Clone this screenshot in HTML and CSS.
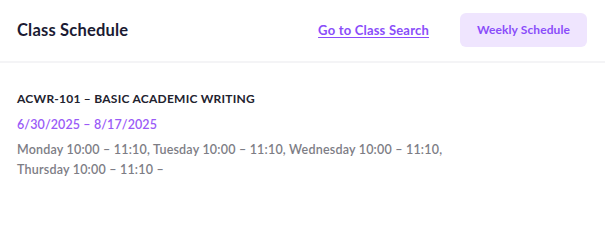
FILE: index.html
```html
<!DOCTYPE html>
<html lang="en">
<head>
<meta charset="utf-8">
<title>Class Schedule</title>
<link rel="stylesheet" href="styles.css">
</head>
<body>
<div class="page">
  <header class="header">
    <h1 class="title">Class Schedule</h1>
    <div class="actions">
      <a class="link" href="#">Go to Class Search</a>
      <button class="btn" type="button">Weekly Schedule</button>
    </div>
  </header>
  <section class="course">
    <h2 class="course-name">ACWR-101 – BASIC ACADEMIC WRITING</h2>
    <p class="dates">6/30/2025 – 8/17/2025</p>
    <p class="times">Monday 10:00 – 11:10, Tuesday 10:00 – 11:10, Wednesday 10:00 – 11:10,<br>Thursday 10:00 – 11:10 –</p>
  </section>
</div>
</body>
</html>
```

FILE: styles.css
```css
* { box-sizing: border-box; }
html, body { margin: 0; padding: 0; background: #ffffff; }
body { font-family: "Lato", "Open Sans", sans-serif; }
.page { width: 605px; }
.header {
  height: 63px;
  display: flex;
  align-items: center;
  justify-content: space-between;
  padding: 0 18px 2px 17px;
  border-bottom: 2px solid #f4f4f6;
}
.title {
  margin: 0;
  font-size: 16.5px;
  font-weight: 700;
  color: #1b1b33;
  letter-spacing: 0.2px;
}
.actions {
  display: flex;
  align-items: center;
  gap: 31px;
}
.link {
  font-size: 13px;
  font-weight: 700;
  color: #8a4dfa;
  text-decoration: underline;
  text-underline-offset: 2px;
  letter-spacing: 0.2px;
}
.btn {
  width: 127px;
  height: 34px;
  border: none;
  border-radius: 6px;
  background: #efe5fe;
  color: #8a4dfa;
  font-family: inherit;
  font-size: 12px;
  font-weight: 700;
  letter-spacing: 0.1px;
  padding: 0;
}
.course { padding: 27px 17px 0; }
.course-name {
  margin: 0;
  font-size: 12px;
  font-weight: 700;
  color: #22222e;
  line-height: 18px;
  letter-spacing: 0.25px;
}
.dates {
  margin: 7px 0 0;
  font-size: 12.5px;
  font-weight: 600;
  color: #9a5bf7;
  line-height: 19px;
  letter-spacing: 0.1px;
}
.times {
  margin: 6px 0 0;
  font-size: 12.5px;
  font-weight: 600;
  color: #7d7d85;
  line-height: 20px;
  letter-spacing: 0.2px;
}
```
